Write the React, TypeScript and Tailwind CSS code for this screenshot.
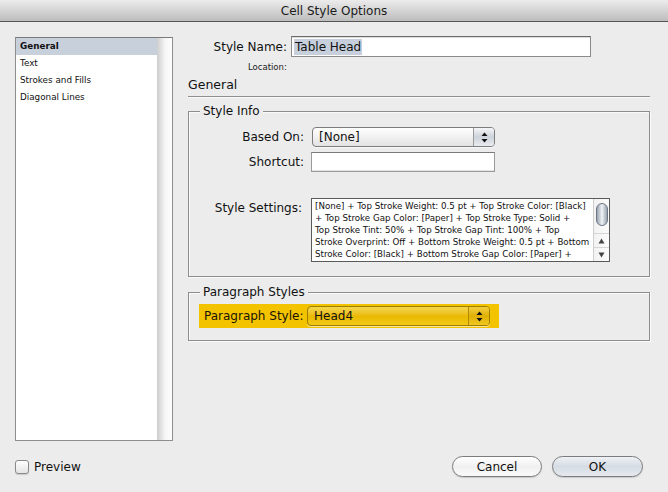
import React from "react";

const font = { fontFamily: '"DejaVu Sans", "Liberation Sans", sans-serif' };

function Stepper({ yellow }: { yellow?: boolean }) {
  return (
    <div
      className={
        "w-[21px] h-full flex items-center justify-center border-l " +
        (yellow
          ? "border-l-[#b08a00] bg-gradient-to-b from-[#f3cf3a] via-[#e0b000] to-[#f0c820]"
          : "border-l-[#9a9a9a] bg-gradient-to-b from-[#f4f6f9] via-[#cdd3db] to-[#e9ecf0]")
      }
    >
      <svg width="7" height="11" viewBox="0 0 7 11">
        <path d="M3.5 0.5 L6.5 4 L0.5 4 Z" fill="#111" />
        <path d="M3.5 10.5 L6.5 7 L0.5 7 Z" fill="#111" />
      </svg>
    </div>
  );
}

function Select({ value, yellow, w }: { value: string; yellow?: boolean; w: string }) {
  return (
    <div
      className={
        "h-[20px] rounded-[4px] border flex items-stretch overflow-hidden shadow-[0_1px_0_rgba(255,255,255,0.6)] " +
        w +
        " " +
        (yellow
          ? "border-[#9c7d00] bg-gradient-to-b from-[#f6d84a] via-[#e9b900] to-[#f2c814]"
          : "border-[#7d7d7d] bg-gradient-to-b from-[#ffffff] via-[#f1f1f1] to-[#e2e2e2]")
      }
    >
      <div className="flex-1 flex items-center pl-[6px] text-[12px] text-[#111]">{value}</div>
      <Stepper yellow={yellow} />
    </div>
  );
}

function AquaButton({ label, def }: { label: string; def?: boolean }) {
  return (
    <div
      className={
        "h-[21px] rounded-full border border-[#7c7c7c] flex items-center justify-center text-[12px] text-[#111] shadow-[0_1px_1px_rgba(0,0,0,0.15)] " +
        (def
          ? "w-[91px] bg-gradient-to-b from-[#eef1f5] via-[#d6dce4] to-[#e6eaef]"
          : "w-[90px] bg-gradient-to-b from-[#ffffff] via-[#f0f0f0] to-[#fafafa]")
      }
    >
      {label}
    </div>
  );
}

export default function App() {
  const listItems = ["General", "Text", "Strokes and Fills", "Diagonal Lines"];
  const settings = [
    "[None] + Top Stroke Weight: 0.5 pt + Top Stroke Color: [Black]",
    "+ Top Stroke Gap Color: [Paper] + Top Stroke Type: Solid +",
    "Top Stroke Tint: 50% + Top Stroke Gap Tint: 100% + Top",
    "Stroke Overprint: Off + Bottom Stroke Weight: 0.5 pt + Bottom",
    "Stroke Color: [Black] + Bottom Stroke Gap Color: [Paper] +",
  ];
  return (
    <div className="w-[668px] h-[492px] bg-[#ececec] flex flex-col overflow-hidden text-[#111]" style={font}>
      {/* title bar */}
      <div className="h-[22px] shrink-0 border-b border-[#555] bg-gradient-to-b from-[#ececec] to-[#bdbdbd] flex items-center justify-center text-[12px] text-[#1a1a1a]">
        Cell Style Options
      </div>

      {/* body */}
      <div className="h-[419px] shrink-0 flex pt-[15px] pl-[15px]">
        {/* left list */}
        <div className="w-[158px] h-[404px] border border-[#8e8e8e] border-t-[#7a7a7a] bg-white flex">
          <div className="flex-1 flex flex-col">
            {listItems.map((it, i) => (
              <div
                key={it}
                className={
                  "h-[17px] flex items-center pl-[4px] text-[8.8px] " +
                  (i === 0 ? "bg-[#c8d0dc] font-bold" : "")
                }
              >
                {it}
              </div>
            ))}
          </div>
          <div className="w-[15px] h-full border-l border-[#d0d0d0] bg-gradient-to-r from-[#d2d2d2] via-[#f6f6f6] to-[#fdfdfd]" />
        </div>

        {/* right column */}
        <div className="ml-[15px] w-[462px] flex flex-col">
          {/* style name */}
          <div className="mt-[-1px] flex items-center h-[21px]">
            <div className="w-[103px] pr-[4px] text-right text-[12px]">Style Name:</div>
            <div className="w-[300px] h-[21px] border border-[#8a8a8a] border-t-[#6a6a6a] bg-white flex items-center pl-[2px] shadow-[inset_0_1px_1px_rgba(0,0,0,0.15)]">
              <span className="bg-[#c6cfdb] text-[12px] px-[1px] leading-[16px]">Table Head</span>
            </div>
          </div>
          <div className="mt-[4px] h-[12px] ml-[60px] text-[8.5px] leading-[12px] text-[#222]">Location:</div>

          {/* General heading */}
          <div className="mt-[4px] h-[16px] leading-[16px] text-[12.5px]">General</div>
          <div className="mt-[3px] h-[2px] border-t border-[#8e8e8e] border-b border-b-[#fafafa]" />

          {/* Style Info */}
          <div className="mt-[13px] h-[166px] border border-[#8e8e8e] relative pt-[15px] shadow-[inset_1px_1px_0_#fafafa,1px_1px_0_#fafafa]">
            <div className="absolute -top-[9px] left-[11px] px-[3px] bg-[#ececec] text-[12px] leading-[16px]">
              Style Info
            </div>
            <div className="flex items-center h-[20px]">
              <div className="w-[119px] pr-[4px] text-right text-[12px]">Based On:</div>
              <div className="ml-[4px]">
                <Select value="[None]" w="w-[183px]" />
              </div>
            </div>
            <div className="mt-[5px] flex items-center h-[20px]">
              <div className="w-[119px] pr-[4px] text-right text-[12px]">Shortcut:</div>
              <div className="ml-[3px] w-[184px] h-[20px] border border-[#9a9a9a] border-t-[#7a7a7a] bg-white shadow-[inset_0_-1px_0_#e4e4e4]" />
            </div>
            <div className="mt-[26px] flex items-start">
              <div className="w-[119px] pr-[6px] mt-[2px] text-right text-[12px] leading-[16px]">Style Settings:</div>
              <div className="ml-[3px] w-[299px] h-[64px] border border-[#5a5a5a] bg-white flex">
                <div className="flex-1 pl-[3px] pt-[1px] text-[8.7px] leading-[12px] text-[#111] overflow-hidden">
                  {settings.map((s) => (
                    <div key={s} className="whitespace-nowrap">
                      {s}
                    </div>
                  ))}
                </div>
                <div className="w-[16px] shrink-0 h-full border-l border-[#cfcfcf] bg-gradient-to-r from-[#f2f2f2] to-[#fcfcfc] flex flex-col items-center">
                  <div className="mt-[4px] w-[12px] h-[23px] rounded-full border border-[#6d7784] bg-gradient-to-r from-[#9aa4b0] via-[#f0f3f6] to-[#9aa4b0]" />
                  <div className="flex-1" />
                  <div className="w-full h-[14px] border-t border-[#d6d6d6] flex items-center justify-center">
                    <svg width="7" height="6" viewBox="0 0 7 6">
                      <path d="M3.5 0.5 L6.5 5.5 L0.5 5.5 Z" fill="#444" />
                    </svg>
                  </div>
                  <div className="w-full h-[14px] border-t border-[#d6d6d6] flex items-center justify-center">
                    <svg width="7" height="6" viewBox="0 0 7 6">
                      <path d="M3.5 5.5 L6.5 0.5 L0.5 0.5 Z" fill="#444" />
                    </svg>
                  </div>
                </div>
              </div>
            </div>
          </div>

          {/* Paragraph Styles */}
          <div className="mt-[15px] h-[49px] border border-[#8e8e8e] relative pt-[11px] shadow-[inset_1px_1px_0_#fafafa,1px_1px_0_#fafafa]">
            <div className="absolute -top-[9px] left-[11px] px-[3px] bg-[#ececec] text-[12px] leading-[16px]">
              Paragraph Styles
            </div>
            <div className="ml-[10px] w-[300px] h-[24px] bg-[#f4c300] flex items-center pl-[5px]">
              <div className="w-[103px] text-[12px] text-[#1a1400]">Paragraph Style:</div>
              <Select value="Head4" yellow w="w-[183px]" />
            </div>
          </div>
        </div>
      </div>

      {/* bottom row */}
      <div className="flex-1 flex items-center pl-[15px] pr-[25px]">
        <div className="w-[14px] h-[14px] rounded-[3px] border border-[#8a8a8a] bg-gradient-to-b from-[#ffffff] to-[#e4e4e4] shadow-[0_1px_1px_rgba(0,0,0,0.15)]" />
        <div className="ml-[5px] text-[12px]">Preview</div>
        <div className="flex-1" />
        <AquaButton label="Cancel" />
        <div className="w-[10px]" />
        <AquaButton label="OK" def />
      </div>
    </div>
  );
}
